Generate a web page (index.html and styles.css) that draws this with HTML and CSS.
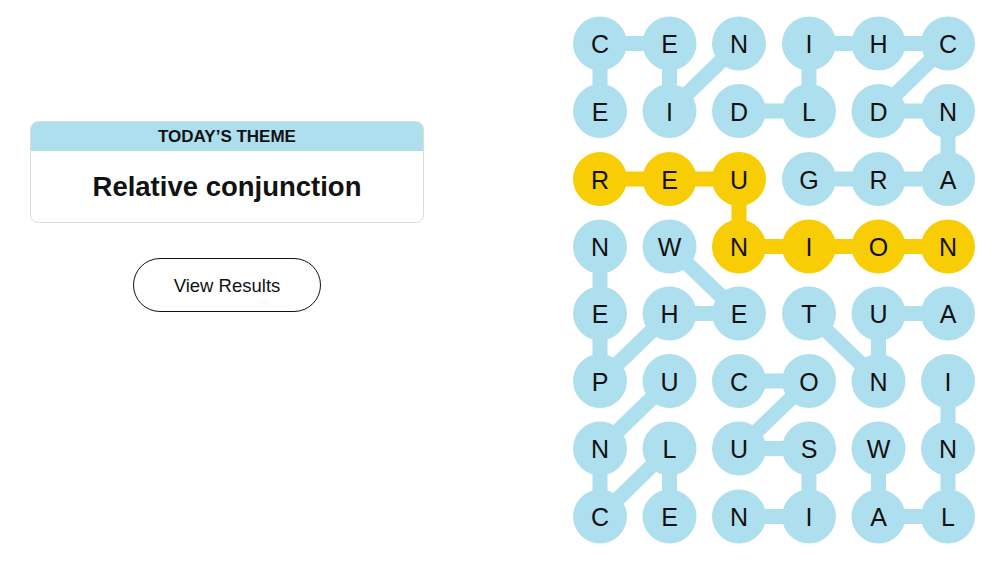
FILE: index.html
```html
<!DOCTYPE html>
<html lang="en">
<head>
    <meta charset="UTF-8">
    <meta name="viewport" content="width=device-width, initial-scale=1.0">
    <title>Strands</title>
    <link rel="stylesheet" href="styles.css">
</head>
<body>
    <div class="page">
        <div class="side">
            <div class="theme-card">
                <div class="theme-label">TODAY’S THEME</div>
                <div class="theme-title">Relative conjunction</div>
            </div>
            <button class="results-btn">View Results</button>
        </div>

        <!-- Tabuleiro de letras -->
        <svg class="board" width="420" height="563" viewBox="0 0 420 563">
            <g class="links">
                <line x1="34" y1="43.5" x2="103.5" y2="43.5"/>
                <line x1="243" y1="43.5" x2="382" y2="43.5"/>
                <line x1="34" y1="43.5" x2="34" y2="111"/>
                <line x1="103.5" y1="43.5" x2="103.5" y2="111"/>
                <line x1="103.5" y1="111" x2="173" y2="43.5"/>
                <line x1="243" y1="43.5" x2="243" y2="111"/>
                <line x1="173" y1="111" x2="243" y2="111"/>
                <line x1="382" y1="43.5" x2="312.5" y2="111"/>
                <line x1="312.5" y1="111" x2="382" y2="111"/>
                <line x1="382" y1="111" x2="382" y2="179"/>
                <line x1="243" y1="179" x2="382" y2="179"/>
                <line x1="34" y1="246.5" x2="34" y2="381"/>
                <line x1="103.5" y1="246.5" x2="173" y2="313.5"/>
                <line x1="103.5" y1="313.5" x2="173" y2="313.5"/>
                <line x1="103.5" y1="313.5" x2="34" y2="381"/>
                <line x1="312.5" y1="313.5" x2="382" y2="313.5"/>
                <line x1="243" y1="313.5" x2="312.5" y2="381"/>
                <line x1="312.5" y1="313.5" x2="312.5" y2="381"/>
                <line x1="173" y1="381" x2="243" y2="381"/>
                <line x1="103.5" y1="381" x2="34" y2="448.5"/>
                <line x1="243" y1="381" x2="173" y2="448.5"/>
                <line x1="382" y1="381" x2="382" y2="516.5"/>
                <line x1="173" y1="448.5" x2="243" y2="448.5"/>
                <line x1="34" y1="448.5" x2="34" y2="516.5"/>
                <line x1="103.5" y1="448.5" x2="34" y2="516.5"/>
                <line x1="103.5" y1="448.5" x2="103.5" y2="516.5"/>
                <line x1="243" y1="448.5" x2="243" y2="516.5"/>
                <line x1="312.5" y1="448.5" x2="312.5" y2="516.5"/>
                <line x1="173" y1="516.5" x2="243" y2="516.5"/>
                <line x1="312.5" y1="516.5" x2="382" y2="516.5"/>
            </g>
            <polyline class="links spangram" points="34,179 173,179 173,246.5 382,246.5"/>

            <g class="cells">
                <circle cx="34" cy="43.5" r="27"/><circle cx="103.5" cy="43.5" r="27"/><circle cx="173" cy="43.5" r="27"/><circle cx="243" cy="43.5" r="27"/><circle cx="312.5" cy="43.5" r="27"/><circle cx="382" cy="43.5" r="27"/>
                <circle cx="34" cy="111" r="27"/><circle cx="103.5" cy="111" r="27"/><circle cx="173" cy="111" r="27"/><circle cx="243" cy="111" r="27"/><circle cx="312.5" cy="111" r="27"/><circle cx="382" cy="111" r="27"/>
                <circle cx="243" cy="179" r="27"/><circle cx="312.5" cy="179" r="27"/><circle cx="382" cy="179" r="27"/>
                <circle cx="34" cy="246.5" r="27"/><circle cx="103.5" cy="246.5" r="27"/>
                <circle cx="34" cy="313.5" r="27"/><circle cx="103.5" cy="313.5" r="27"/><circle cx="173" cy="313.5" r="27"/><circle cx="243" cy="313.5" r="27"/><circle cx="312.5" cy="313.5" r="27"/><circle cx="382" cy="313.5" r="27"/>
                <circle cx="34" cy="381" r="27"/><circle cx="103.5" cy="381" r="27"/><circle cx="173" cy="381" r="27"/><circle cx="243" cy="381" r="27"/><circle cx="312.5" cy="381" r="27"/><circle cx="382" cy="381" r="27"/>
                <circle cx="34" cy="448.5" r="27"/><circle cx="103.5" cy="448.5" r="27"/><circle cx="173" cy="448.5" r="27"/><circle cx="243" cy="448.5" r="27"/><circle cx="312.5" cy="448.5" r="27"/><circle cx="382" cy="448.5" r="27"/>
                <circle cx="34" cy="516.5" r="27"/><circle cx="103.5" cy="516.5" r="27"/><circle cx="173" cy="516.5" r="27"/><circle cx="243" cy="516.5" r="27"/><circle cx="312.5" cy="516.5" r="27"/><circle cx="382" cy="516.5" r="27"/>
            </g>
            <g class="cells spangram">
                <circle cx="34" cy="179" r="27"/><circle cx="103.5" cy="179" r="27"/><circle cx="173" cy="179" r="27"/>
                <circle cx="173" cy="246.5" r="27"/><circle cx="243" cy="246.5" r="27"/><circle cx="312.5" cy="246.5" r="27"/><circle cx="382" cy="246.5" r="27"/>
            </g>

            <g class="letters">
                <text x="34" y="53">C</text><text x="103.5" y="53">E</text><text x="173" y="53">N</text><text x="243" y="53">I</text><text x="312.5" y="53">H</text><text x="382" y="53">C</text>
                <text x="34" y="120.5">E</text><text x="103.5" y="120.5">I</text><text x="173" y="120.5">D</text><text x="243" y="120.5">L</text><text x="312.5" y="120.5">D</text><text x="382" y="120.5">N</text>
                <text x="34" y="188.5">R</text><text x="103.5" y="188.5">E</text><text x="173" y="188.5">U</text><text x="243" y="188.5">G</text><text x="312.5" y="188.5">R</text><text x="382" y="188.5">A</text>
                <text x="34" y="256">N</text><text x="103.5" y="256">W</text><text x="173" y="256">N</text><text x="243" y="256">I</text><text x="312.5" y="256">O</text><text x="382" y="256">N</text>
                <text x="34" y="323">E</text><text x="103.5" y="323">H</text><text x="173" y="323">E</text><text x="243" y="323">T</text><text x="312.5" y="323">U</text><text x="382" y="323">A</text>
                <text x="34" y="390.5">P</text><text x="103.5" y="390.5">U</text><text x="173" y="390.5">C</text><text x="243" y="390.5">O</text><text x="312.5" y="390.5">N</text><text x="382" y="390.5">I</text>
                <text x="34" y="458">N</text><text x="103.5" y="458">L</text><text x="173" y="458">U</text><text x="243" y="458">S</text><text x="312.5" y="458">W</text><text x="382" y="458">N</text>
                <text x="34" y="526">C</text><text x="103.5" y="526">E</text><text x="173" y="526">N</text><text x="243" y="526">I</text><text x="312.5" y="526">A</text><text x="382" y="526">L</text>
            </g>
        </svg>
    </div>
</body>
</html>
```

FILE: styles.css
```css
body {
    font-family: 'Liberation Sans', Arial, sans-serif;
    background: #fff;
    color: #121212;
    margin: 0;
    overflow: hidden;
}

.page {
    display: flex;
    height: 563px;
}

.side {
    width: 394px;
    margin-left: 30px;
    padding-top: 121px;
    display: flex;
    flex-direction: column;
    align-items: center;
}

.theme-card {
    width: 100%;
    box-sizing: border-box;
    border: 1px solid #dcdcdc;
    border-radius: 8px;
    overflow: hidden;
}

.theme-label {
    background-color: #aedfee;
    height: 29px;
    line-height: 29px;
    text-align: center;
    font-size: 17px;
    font-weight: bold;
}

.theme-title {
    height: 71px;
    display: flex;
    justify-content: center;
    align-items: center;
    font-size: 27.5px;
    font-weight: bold;
}

.results-btn {
    margin-top: 35px;
    width: 188px;
    height: 54px;
    padding-top: 3px;
    border: 1px solid #121212;
    border-radius: 27px;
    background: #fff;
    color: #121212;
    font-family: inherit;
    font-size: 18.5px;
    cursor: pointer;
}

.board {
    margin-left: 142px;
    display: block;
}

.links {
    stroke: #aedfee;
    stroke-width: 15;
    fill: none;
}

.links.spangram {
    stroke: #f8cd05;
}

.cells {
    fill: #aedfee;
}

.cells.spangram {
    fill: #f8cd05;
}

.letters text {
    font-family: 'Liberation Sans', Arial, sans-serif;
    font-size: 25px;
    text-anchor: middle;
    fill: #121212;
}
```
